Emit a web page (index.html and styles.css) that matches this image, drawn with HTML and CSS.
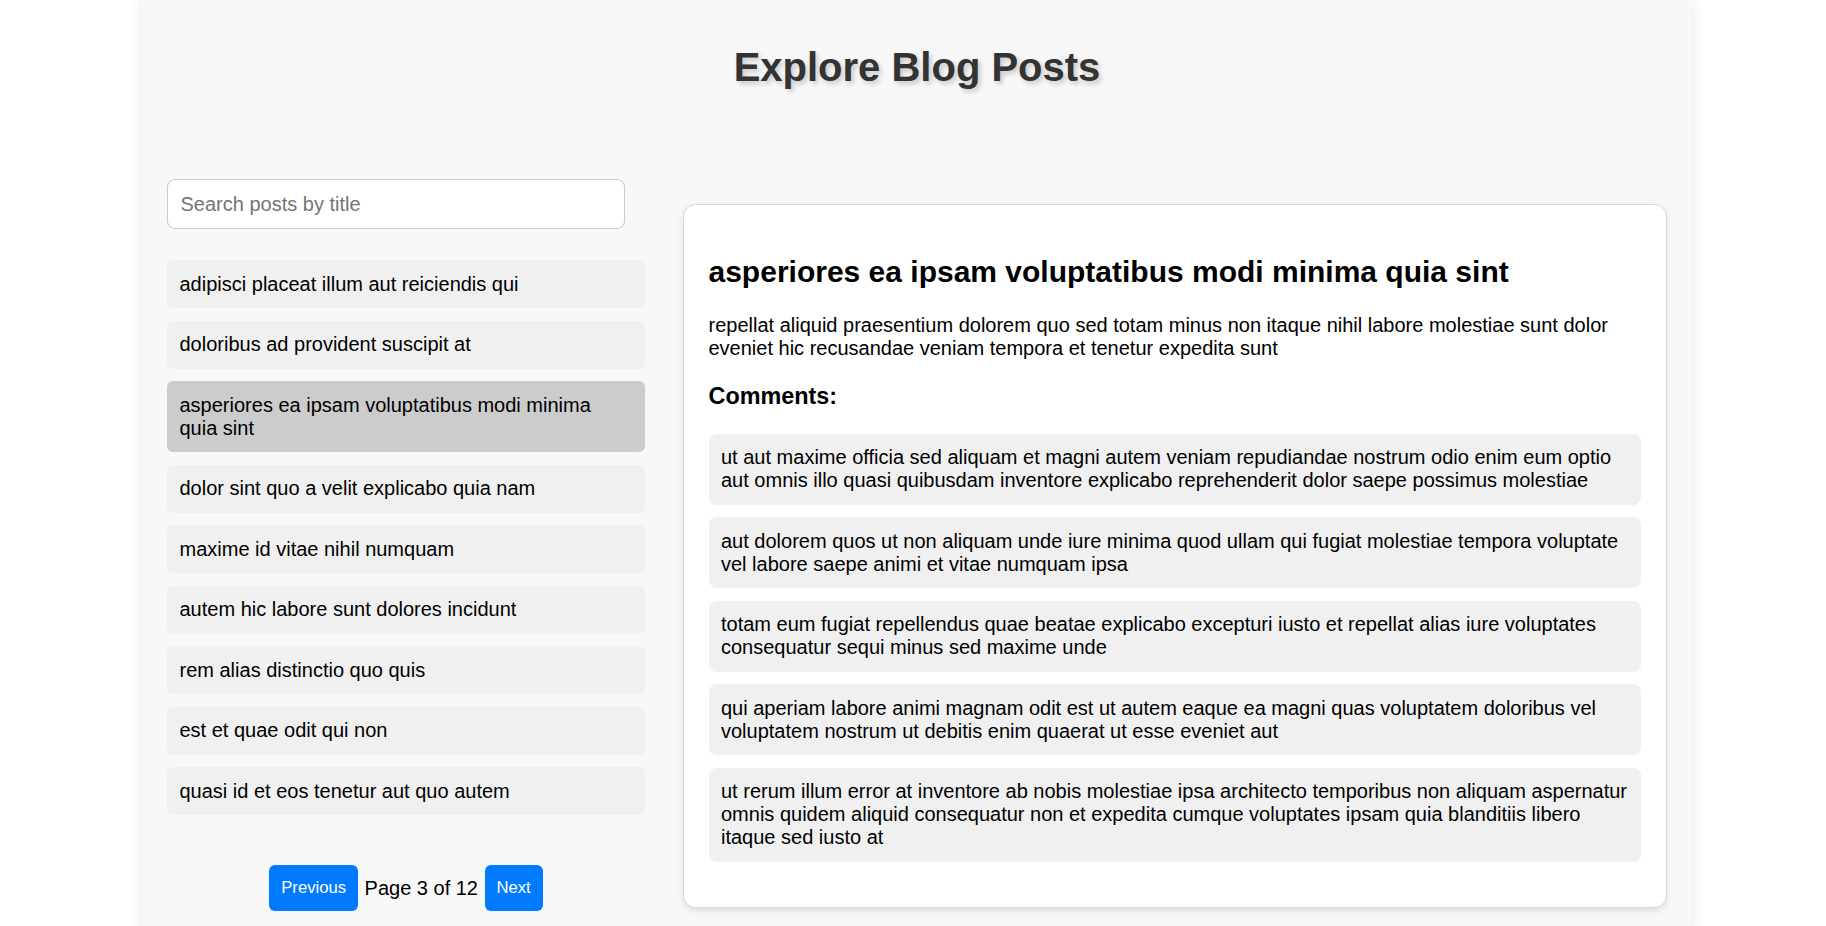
FILE: index.html
```html
<!DOCTYPE html>
<html lang="en">
<head>
<meta charset="utf-8">
<title>Explore Blog Posts</title>
<link rel="stylesheet" href="styles.css">
</head>
<body>
<div class="container">
  <h1 class="page-title">Explore Blog Posts</h1>
  <div class="main">
    <aside class="sidebar">
      <input class="search" type="text" placeholder="Search posts by title">
      <ul class="post-list">
        <li class="post-item">adipisci placeat illum aut reiciendis qui</li>
        <li class="post-item">doloribus ad provident suscipit at</li>
        <li class="post-item selected">asperiores ea ipsam voluptatibus modi minima quia sint</li>
        <li class="post-item">dolor sint quo a velit explicabo quia nam</li>
        <li class="post-item">maxime id vitae nihil numquam</li>
        <li class="post-item">autem hic labore sunt dolores incidunt</li>
        <li class="post-item">rem alias distinctio quo quis</li>
        <li class="post-item">est et quae odit qui non</li>
        <li class="post-item">quasi id et eos tenetur aut quo autem</li>
      </ul>
      <div class="pagination">
        <button class="page-btn">Previous</button><span class="page-info">Page 3 of 12</span><button class="page-btn">Next</button>
      </div>
    </aside>
    <section class="panel">
      <h2 class="post-title">asperiores ea ipsam voluptatibus modi minima quia sint</h2>
      <p class="post-body">repellat aliquid praesentium dolorem quo sed totam minus non itaque nihil labore molestiae sunt dolor eveniet hic recusandae veniam tempora et tenetur expedita sunt</p>
      <h3 class="comments-title">Comments:</h3>
      <ul class="comment-list">
        <li class="comment">ut aut maxime officia sed aliquam et magni autem veniam repudiandae nostrum odio enim eum optio aut omnis illo quasi quibusdam inventore explicabo reprehenderit dolor saepe possimus molestiae</li>
        <li class="comment">aut dolorem quos ut non aliquam unde iure minima quod ullam qui fugiat molestiae tempora voluptate vel labore saepe animi et vitae numquam ipsa</li>
        <li class="comment">totam eum fugiat repellendus quae beatae explicabo excepturi iusto et repellat alias iure voluptates consequatur sequi minus sed maxime unde</li>
        <li class="comment">qui aperiam labore animi magnam odit est ut autem eaque ea magni quas voluptatem doloribus vel voluptatem nostrum ut debitis enim quaerat ut esse eveniet aut</li>
        <li class="comment">ut rerum illum error at inventore ab nobis molestiae ipsa architecto temporibus non aliquam aspernatur omnis quidem aliquid consequatur non et expedita cumque voluptates ipsam quia blanditiis libero itaque sed iusto at</li>
      </ul>
    </section>
  </div>
</div>
</body>
</html>
```

FILE: styles.css
```css
html {
  overflow: hidden;
  background: #ffffff;
}

body {
  margin: 0;
  padding: 0 0 0 8px;
  background: #ffffff;
  font-family: "Liberation Sans", Arial, sans-serif;
  color: #000;
}

.container {
  box-sizing: border-box;
  width: 1550px;
  margin: 0 auto;
  padding: 26px 25px 25px;
  background: #f8f8f8;
  box-shadow: 0 0 12px rgba(0, 0, 0, 0.1);
}

.page-title {
  margin: 19px 0 89px;
  font-size: 40px;
  font-weight: bold;
  line-height: normal;
  text-align: center;
  color: #333;
  text-shadow: 2.5px 2.5px 5px rgba(0, 0, 0, 0.2);
}

.main {
  display: flex;
  align-items: flex-start;
  gap: 37.5px;
}

.sidebar {
  flex: none;
  width: 478px;
}

.search {
  display: block;
  box-sizing: border-box;
  width: 458px;
  margin: 0 0 31px;
  padding: 12.5px;
  font-family: "Liberation Sans", Arial, sans-serif;
  font-size: 20px;
  line-height: normal;
  color: #000;
  background: #fff;
  border: 1px solid #ccc;
  border-radius: 8px;
  outline: none;
}

.search::placeholder {
  color: #757575;
}

.post-list {
  list-style: none;
  margin: 0;
  padding: 0;
}

.post-item {
  margin: 0 0 12.5px;
  padding: 12.5px;
  font-size: 20px;
  line-height: normal;
  background: #f0f0f0;
  border-radius: 6px;
}

.post-item.selected {
  background: #cccccc;
}

.pagination {
  display: flex;
  justify-content: center;
  align-items: center;
  margin-top: 50px;
}

.page-btn {
  padding: 13px 12px;
  font-family: "Liberation Sans", Arial, sans-serif;
  font-size: 16.67px;
  line-height: normal;
  color: #fff;
  background: #007bff;
  border: none;
  border-radius: 6px;
}

.page-info {
  margin: 0 6.5px;
  font-size: 20px;
}

.panel {
  flex: 1;
  min-width: 0;
  margin-top: 25px;
  padding: 25px;
  background: #fff;
  border: 1px solid #d8d8d8;
  border-radius: 12.5px;
  box-shadow: 0 2.5px 6px rgba(0, 0, 0, 0.1);
}

.post-title {
  margin: 25px 0;
  font-size: 30px;
  font-weight: bold;
  line-height: normal;
}

.post-body {
  margin: 20px 0;
  font-size: 20px;
  line-height: normal;
}

.comments-title {
  margin: 23.4px 0;
  font-size: 23.4px;
  font-weight: bold;
  line-height: normal;
}

.comment-list {
  list-style: none;
  margin: 0 0 20px;
  padding: 0;
}

.comment {
  margin: 0 0 12.5px;
  padding: 12.5px;
  font-size: 20px;
  line-height: normal;
  background: #f0f0f0;
  border-radius: 8px;
}
```
